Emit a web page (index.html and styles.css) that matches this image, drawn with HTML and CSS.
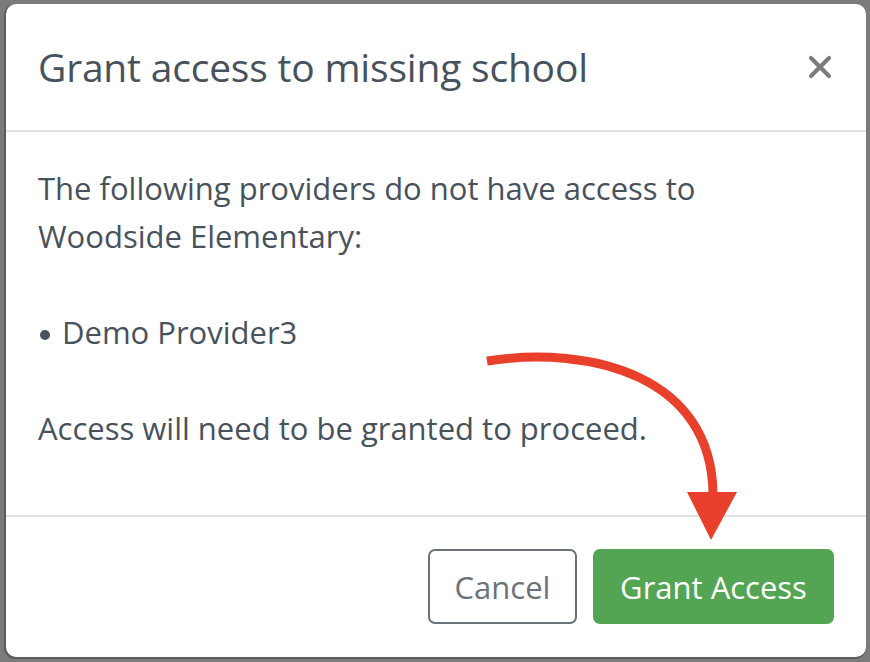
FILE: index.html
```html
<!DOCTYPE html>
<html>

<head>
  <title>Grant access to missing school</title>
  <link rel="stylesheet" href="styles.css">
</head>

<body>
  <!-- Modal backdrop -->
  <div class="backdrop">
    <div class="modal">
      <div class="modal-header">
        <h2 class="modal-title">Grant access to missing school</h2>
        <button class="close-btn" aria-label="Close">
          <svg width="24" height="24" viewBox="0 0 24 24">
            <path d="M3 3 L21 21 M21 3 L3 21" stroke="#7b7b7b" stroke-width="4.2" stroke-linecap="round" fill="none" />
          </svg>
        </button>
      </div>

      <div class="modal-body">
        <p>
          The following providers do not have access to<br>
          Woodside Elementary:<br>
          <br>
          <span class="bullet"></span>Demo Provider3<br>
          <br>
          Access will need to be granted to proceed.
        </p>
      </div>

      <div class="modal-footer">
        <button class="btn btn-cancel">Cancel</button>
        <button class="btn btn-grant">Grant Access</button>
      </div>

      <!-- Annotation arrow drawn over the dialog -->
      <svg class="arrow" width="860" height="653" viewBox="0 0 860 653">
        <path d="M481 357 C 585 341, 706 372, 707 490" stroke="#e8402a" stroke-width="9" fill="none" />
        <polygon points="681,488 731,488 705,536" fill="#e8402a" />
      </svg>
    </div>
  </div>
</body>

</html>
```

FILE: styles.css
```css
/* Reset some default styles */
body,
h2,
p,
button {
  margin: 0;
  padding: 0;
}

body {
  font-family: 'Open Sans', 'Lato', sans-serif;
  background-color: #7b7b7b;
  /* Dimmed page behind the dialog */
}

.backdrop {
  padding: 4px 4px 5px 6px;
}

.modal {
  position: relative;
  width: 860px;
  height: 653px;
  box-sizing: border-box;
  background-color: #fff;
  border-radius: 10px;
  box-shadow: -1px 1px 0 1px rgba(0, 0, 0, 0.25);
  display: flex;
  flex-direction: column;
  color: #48525c;
}

.modal-header {
  display: flex;
  align-items: center;
  justify-content: space-between;
  padding: 32px 34px 32px 32px;
  border-bottom: 2px solid #dee2e6;
}

.modal-title {
  font-size: 39px;
  font-weight: 400;
  line-height: 62px;
  letter-spacing: -0.2px;
}

.close-btn {
  background: none;
  border: none;
  width: 24px;
  height: 24px;
  cursor: pointer;
}

.modal-body {
  flex: 1;
  padding: 32px;
  border-bottom: 2px solid #dee2e6;
}

.modal-body p {
  font-size: 31px;
  line-height: 48px;
}

/* Round list dot before the provider name */
.bullet {
  display: inline-block;
  width: 10px;
  height: 10px;
  margin: 0 12px 0 2px;
  border-radius: 50%;
  background-color: #48525c;
  vertical-align: 4px;
}

.modal-footer {
  display: flex;
  justify-content: flex-end;
  gap: 16px;
  padding: 32px 32px 33px;
}

.btn {
  height: 75px;
  padding: 0 10px;
  font-family: inherit;
  font-size: 31px;
  border-radius: 7px;
  cursor: pointer;
  box-sizing: border-box;
}

.btn-cancel {
  width: 149px;
  background-color: #fff;
  border: 2px solid #6c727a;
  color: #6c727a;
}

.btn-grant {
  width: 241px;
  background-color: #53a553;
  /* Green */
  border: none;
  color: #fff;
}

.btn-grant:hover {
  background-color: #4a9a4a;
}

.arrow {
  position: absolute;
  left: 0;
  top: 0;
  pointer-events: none;
}
```
